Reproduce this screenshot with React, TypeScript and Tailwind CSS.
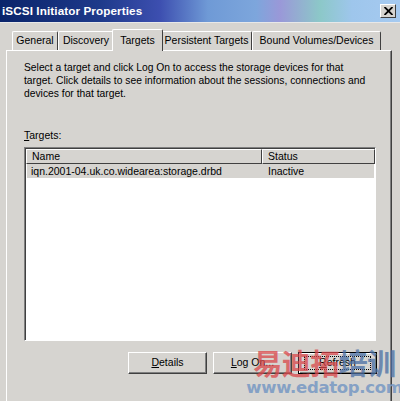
import React from "react";

const font = { fontFamily: '"Liberation Sans", Arial, sans-serif' };

function Tab({ label, w, selected }: { label: string; w: number; selected?: boolean }) {
  return (
    <div
      className={
        "flex items-center justify-center text-[10.5px] text-black border-t border-l border-white border-r border-r-[#404040] rounded-t-[2px] " +
        (selected ? "h-[22px] bg-[#d6d4d0] -mx-[2px] z-10 relative mb-[-1px]" : "h-[19px] bg-[#d6d4d0]")
      }
      style={{ width: w }}
    >
      {label}
    </div>
  );
}

function Btn({ children, def }: { children: React.ReactNode; def?: boolean }) {
  return (
    <div
      className={
        "w-[79px] h-[22px] bg-[#d6d4d0] flex items-center justify-center text-[10.5px] text-black " +
        (def
          ? "border border-black shadow-[inset_1px_1px_0_#ffffff,inset_-1px_-1px_0_#808080]"
          : "border-t border-l border-white border-r border-b border-r-[#404040] border-b-[#404040] shadow-[inset_-1px_-1px_0_#808080]")
      }
    >
      {def ? (
        <div className="border border-dotted border-black w-[67px] h-[14px] flex items-center justify-center">{children}</div>
      ) : (
        children
      )}
    </div>
  );
}

export default function App() {
  return (
    <div className="relative w-[400px] h-[401px] overflow-hidden bg-[#d6d4d0]" style={font}>
      {/* Title bar */}
      <div className="h-[22px] flex items-center justify-between pl-[2px] pr-[4px] bg-[linear-gradient(90deg,#0a246a_0%,#1e3a8a_25%,#3d4fb0_40%,#6f9ad6_52%,#7da6dc_64%,#9a98d8_70%,#8cc8c8_80%,#9ec6ec_88%,#a6caf0_100%)]">
        <span className="text-white font-bold text-[11.7px] tracking-[0.1px]">iSCSI Initiator Properties</span>
        <div className="w-[16px] h-[14px] bg-[#d6d4d0] border-t border-l border-white border-r border-b border-r-[#404040] border-b-[#404040] flex items-center justify-center">
          <svg width="9" height="8" viewBox="0 0 9 8">
            <path d="M0.5 0 L8.5 8 M8.5 0 L0.5 8" stroke="#000" strokeWidth="1.8" fill="none" />
          </svg>
        </div>
      </div>
      <div className="h-[1px] bg-[#e8e8e8]" />

      {/* Tabs */}
      <div className="flex items-end pl-[12px] pt-[5px] h-[27px]">
        <Tab label="General" w={46} />
        <Tab label="Discovery" w={56} />
        <Tab label="Targets" w={51} selected />
        <Tab label="Persistent Targets" w={91} />
        <Tab label="Bound Volumes/Devices" w={129} />
      </div>

      {/* Panel */}
      <div className="ml-[6px] w-[386px] h-[360px] border-t border-l border-white border-r border-r-[#404040] shadow-[inset_-1px_0_0_#808080] pl-[17px] pt-[10px] text-[10.5px] text-black">
        <p className="leading-[13px] whitespace-nowrap text-[10.3px]">
          Select a target and click Log On to access the storage devices for that
          <br />
          target. Click details to see information about the sessions, connections and
          <br />
          devices for that target.
        </p>
        <div className="mt-[29px] leading-[13px]">
          <span className="underline">T</span>argets:
        </div>
        <div className="mt-[5px] w-[352px] h-[194px] bg-white border-t border-l border-[#808080] border-r border-b border-r-white border-b-white shadow-[inset_1px_1px_0_#404040]">
          <div className="ml-[1px] mt-[1px] flex h-[15px]">
            <div className="w-[236px] bg-[#d6d4d0] border-t border-l border-white border-r border-b border-r-[#404040] border-b-[#404040] pl-[5px] leading-[12px]">
              Name
            </div>
            <div className="w-[113px] bg-[#d6d4d0] border-t border-l border-white border-r border-b border-r-[#404040] border-b-[#404040] pl-[5px] leading-[12px]">
              Status
            </div>
          </div>
          <div className="ml-[2px] w-[347px] flex h-[14px] bg-[#d6d4d0] leading-[14px]">
            <div className="w-[236px] pl-[4px]">iqn.2001-04.uk.co.widearea:storage.drbd</div>
            <div className="pl-[5px]">Inactive</div>
          </div>
        </div>
        <div className="mt-[11px] flex justify-end gap-[6px] w-[353px]">
          <Btn>
            <span>
              <span className="underline">D</span>etails
            </span>
          </Btn>
          <Btn>
            <span>
              <span className="underline">L</span>og On...
            </span>
          </Btn>
          <Btn def>
            <span>
              <span className="underline">R</span>efresh
            </span>
          </Btn>
        </div>
      </div>

      {/* Watermark */}
      <div className="absolute left-[249px] top-[346px] w-[151px] flex flex-col items-center pointer-events-none">
        <div
          className="text-[29px] font-bold leading-[32px] tracking-[-0.5px] opacity-75"
          style={{ fontFamily: '"Noto Sans CJK SC", sans-serif' }}
        >
          <span className="text-[#d9474a]">易迪拓</span>
          <span className="text-[#4a6fa5]">培训</span>
        </div>
        <div
          className="mt-[1px] text-[16.5px] font-bold leading-[18px] tracking-[-0.3px] text-[#7d9cc4] opacity-90 whitespace-nowrap"
          style={{ fontFamily: '"DejaVu Sans", Verdana, sans-serif' }}
        >
          www.edatop.com
        </div>
      </div>
    </div>
  );
}
